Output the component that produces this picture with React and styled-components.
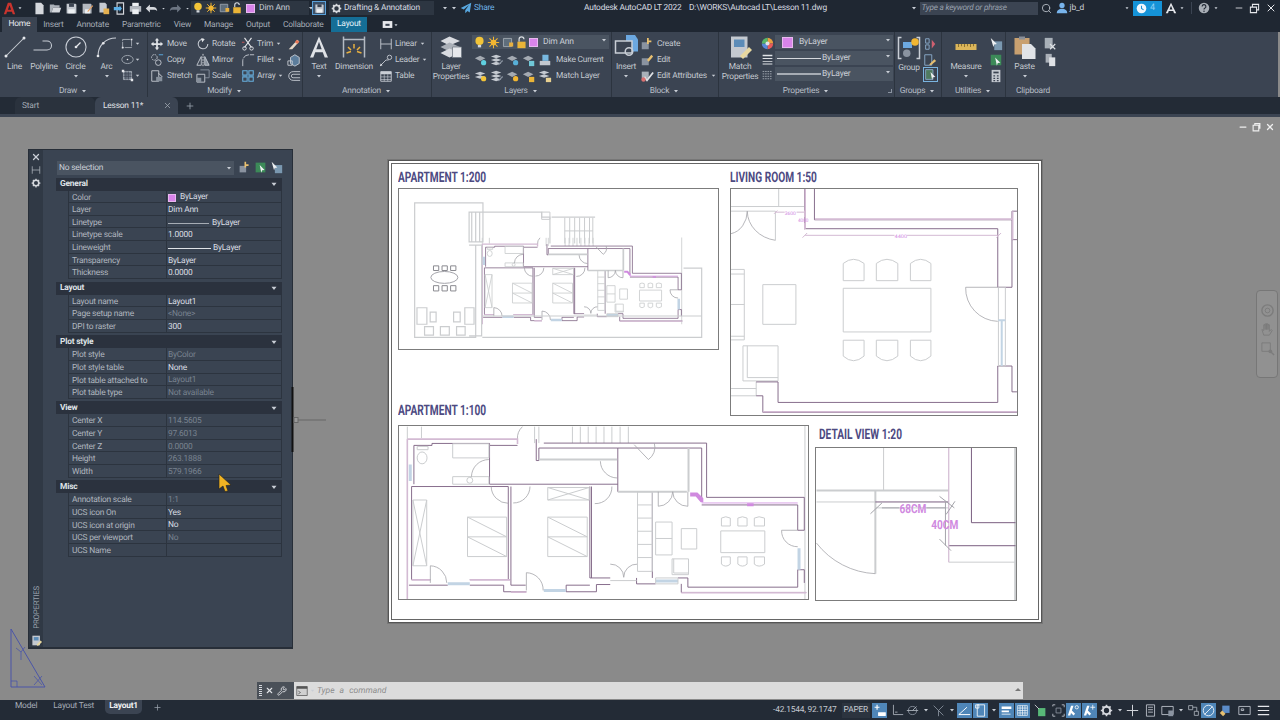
import React from 'react'
import styled, { createGlobalStyle } from 'styled-components'
import { X, Plus, Search, Wrench, Minus } from 'lucide-react'

const GlobalStyle = createGlobalStyle`
  html, body { margin: 0; padding: 0; background: #8a8a8a; }
  body { font-family: Roboto, "Liberation Sans", sans-serif; overflow: hidden; text-rendering: geometricPrecision; }
  #root { width: 1280px; height: 720px; }
`

// colours of the drawings
const WALL = '#7a5f80'
const PINK = '#d3bad3'
const GREY = '#cbcdcf'
const LINE = '#a4a4aa'
const FRAME = '#7c7c7c'
const GLASS = '#c2d4e4'
const DIM = '#d08adf'

/* ---------- icons ---------- */
const Svg = styled.svg`
  flex: none;
  display: block;
`
const ICONS = {
  doc: <path d="M3 1h7l3 3v11H3z" fill="#d5d8dd" />,
  open: <><path d="M1 3h5l1 1h6v3H5l-2 6H1z" fill="#aab0b8" /><path d="M5 7h10l-2 6H3z" fill="#d5d8dd" /></>,
  save: <><path d="M2 2h11l1 1v11H2z" fill="#c4c9d0" /><path d="M5 2h6v4H5z" fill="#3b4452" /><path d="M4 9h8v5H4z" fill="#edf0f3" /></>,
  saveas: <><path d="M2 2h10l1 1v11H2z" fill="#b4b9c0" /><path d="M5 9h6v5H5z" fill="#edf0f3" /><path d="M8 11l6-7 1 1-6 7H8z" fill="#e8a060" /></>,
  publish: <><path d="M3 1h7l2 2v10H3z" fill="#c4c9d0" /><path d="M8 8h7v7H8z" fill="#e4b050" /></>,
  share: <><path d="M5 1h8v14H5z" fill="none" stroke="#d5d8dd" strokeWidth="1.4" /><path d="M1 6h7V4l3 4-3 4v-2H1z" fill="#5db0e8" /></>,
  print: <><path d="M4 1h8v4H4z" fill="#edf0f3" /><path d="M1 5h14v7H1z" fill="#b4b9c0" /><path d="M4 9h8v6H4z" fill="#edf0f3" /></>,
  undo: <path d="M6 3L1 8l5 5V9.500h5c1.500 0 3 .5 4 1.500 0-3-2-5-5-5H6z" fill="#d5d8dd" />,
  redo: <path d="M10 3l5 5-5 5V9.500H5C3.500 9.500 2 10 1 11c0-3 2-5 5-5h4z" fill="#6c7582" />,
  caret: <path d="M4 6h8l-4 5z" fill="#c9ced6" />,
  bulb: <><circle cx="8" cy="6" r="5" fill="#f2c438" /><path d="M6 11h4v3H6z" fill="#d2d6dc" /></>,
  sun: <><circle cx="8" cy="8" r="3.500" fill="#f2b632" /><path d="M8 1v14M1 8h14M3 3l10 10M13 3L3 13" stroke="#f2b632" strokeWidth="1.300" /></>,
  frame: <><path d="M3 3h10v10H3z" fill="#5f6e7c" stroke="#a8b0b8" /><path d="M10 8h5v5h-5z" fill="#e8b040" /></>,
  lock: <><path d="M5 7V4a3 3 0 0 1 6 0" fill="none" stroke="#d8dce0" strokeWidth="1.500" /><path d="M3 7h10v8H3z" fill="#eab437" /></>,
  gear: <><circle cx="8" cy="8" r="4.500" fill="none" stroke="#d5d8dd" strokeWidth="2.500" /><path d="M8 1v3M8 12v3M1 8h3M12 8h3M3 3l2 2M11 11l2 2M13 3l-2 2M5 11l-2 2" stroke="#d5d8dd" strokeWidth="2" /></>,
  plane: <path d="M15 1L1 8l4 2 7-6-5 7v4l3-3 3 2z" fill="#58a8e0" />,
  line: <><path d="M2 14L14 2" stroke="#c9ced6" strokeWidth=".7" /><circle cx="2" cy="14" r="1" fill="#e6e8ec" /><circle cx="14" cy="2" r="1" fill="#e6e8ec" /></>,
  polyline: <path d="M1 10h9a3 3 0 0 0 0-6H7" fill="none" stroke="#c9ced6" strokeWidth=".7" />,
  circle: <><circle cx="8" cy="8" r="6.700" fill="none" stroke="#c9ced6" strokeWidth=".7" /><path d="M8 8l3-3" stroke="#e6e8ec" strokeWidth=".8" /><circle cx="8" cy="8" r=".9" fill="#e6e8ec" /></>,
  arc: <><path d="M2 14C2 7 7 2 14 2" fill="none" stroke="#c9ced6" strokeWidth=".7" /><circle cx="2" cy="14" r=".9" fill="#e6e8ec" /><circle cx="5.500" cy="5.500" r=".9" fill="#e6e8ec" /></>,
  rect: <><path d="M2 3h11v10H2z" fill="none" stroke="#aeb5be" strokeDasharray="9 1" /><path d="M12 2h2v2h-2zM1 12h2v2H1z" fill="#e6e8ec" /></>,
  ellipse: <><ellipse cx="8" cy="8" rx="7" ry="5" fill="none" stroke="#aeb5be" /><circle cx="8" cy="8" r="1" fill="#e6e8ec" /></>,
  hatch: <><path d="M3 3h10v10H3z" fill="#6f7a88" stroke="#aeb5be" /><path d="M3 6h10M3 9h10M6 3v10M9 3v10" stroke="#3b4452" /><path d="M1 1h3v3H1zM12 12h3v3h-3z" fill="#e6e8ec" /></>,
  move: <path d="M8 1l2.500 3H9v3h3V5.500L15 8l-3 2.500V9H9v3h1.500L8 15l-2.500-3H7V9H4v1.500L1 8l3-2.500V7h3V4H5.500z" fill="#dfe2e6" />,
  copy: <><circle cx="9.500" cy="11" r="3.200" fill="none" stroke="#c9ced6" /><circle cx="5" cy="5" r="3.200" fill="none" stroke="#c9ced6" strokeDasharray="2 1" /><path d="M10 2h5" stroke="#5db0e8" /></>,
  stretch: <><path d="M2 2h8v12H2z" fill="none" stroke="#c9ced6" /><path d="M7 9h7v5H7z" fill="#87909c" /><path d="M10 5l4 4" stroke="#e6e8ec" /></>,
  rotate: <><path d="M13.500 8A5.500 5.500 0 1 1 9 2.600" fill="none" stroke="#c9ced6" strokeWidth="1.200" /><path d="M6 1l4 1.500L7 6z" fill="#dfe2e6" /></>,
  mirror: <><path d="M1 14L6 4v10z" fill="none" stroke="#c9ced6" /><path d="M15 14L10 4v10z" fill="#87909c" stroke="#c9ced6" /><path d="M8 1v14" stroke="#e6e8ec" strokeDasharray="2 1" /></>,
  scale: <><path d="M1 6h9v9H1z" fill="none" stroke="#c9ced6" /><path d="M5 1h10v9H10" fill="none" stroke="#8a93a0" /><path d="M1 10h5v5H1z" fill="#87909c" /></>,
  trim: <><path d="M4 1l8 11M12 1L4 12" stroke="#e6e8ec" strokeWidth="1.300" /><circle cx="4" cy="13" r="2" fill="none" stroke="#e6e8ec" /><circle cx="12" cy="13" r="2" fill="none" stroke="#e6e8ec" /><path d="M1 6h3" stroke="#d05858" /></>,
  fillet: <path d="M2 15V9a7 7 0 0 1 7-7h6" fill="none" stroke="#c9ced6" strokeDasharray="8 1" />,
  array: <path d="M2 2h5v5H2zM9 2h5v5H9zM2 9h5v5H2zM9 9h5v5H9z" fill="none" stroke="#68b0e0" strokeWidth="1.200" />,
  eraser: <><path d="M2 14L12 3l2 2-8 9z" fill="#e6d8c8" /><path d="M9 6l2-3 3 2-2 3z" fill="#e87858" /></>,
  explode: <><path d="M4 5l5-3 5 3v7l-5 3-5-3z" fill="#5c7d9c" stroke="#c9ced6" /><path d="M1 9h5v5H1z" fill="none" stroke="#c9ced6" /></>,
  offset: <path d="M15 3H7a5 5 0 0 0 0 10h8M15 6H7a2 2 0 0 0 0 4h8" fill="none" stroke="#c9ced6" />,
  text: <path d="M8 1L2 15h2.200l1.300-3.500h5l1.300 3.500H14zM6.200 9.500L8 4.500l1.800 5z" fill="#dfe2e6" fillRule="evenodd" />,
  dimension: <><path d="M1 1v14M15 1v14M1 3h14" fill="none" stroke="#b4bac3" /><path d="M8 6v3M4 8l2 2M12 8l-2 2M3 12l3-1M13 12l-3-1" stroke="#e8b040" /></>,
  linear: <path d="M2 2v12M14 2v12M2 8h12" fill="none" stroke="#c9ced6" />,
  leader: <><path d="M2 14l6-6h3" fill="none" stroke="#c9ced6" /><circle cx="12" cy="5" r="2.500" fill="none" stroke="#c9ced6" /><path d="M1 15l3-1-2-2z" fill="#e6e8ec" /></>,
  table: <><path d="M2 3h12v11H2z" fill="none" stroke="#c9ced6" /><path d="M2 3h12v3H2z" fill="#c9ced6" /><path d="M2 9h12M2 12h12M6 6v8M10 6v8" stroke="#c9ced6" strokeWidth=".7" /></>,
  layers: <><path d="M1 4l6-3 7 3-7 3z" fill="#d8dbe0" /><path d="M1 8l6-3 7 3-7 3z" fill="#aab0b8" /><path d="M1 12l6-3 7 3-7 3z" fill="#d8dbe0" /><path d="M9 8h6v7H9z" fill="#e6e8ec" stroke="#6e7680" strokeWidth=".5" /></>,
  layOff: <><path d="M1 6l6-3 6 3-6 3z" fill="#a4aab2" /><circle cx="11" cy="11" r="3" fill="#5fd0e0" /></>,
  layIso: <><path d="M1 4l6-2 6 2-6 2zM1 8l6-2 6 2-6 2zM1 12l6-2 6 2-6 2z" fill="#c4c9d0" /><path d="M9 13l5-5 1 1-5 5z" fill="#8a93a0" /></>,
  layFrz: <><path d="M1 6l6-3 6 3-6 3z" fill="#a4aab2" /><circle cx="11" cy="11" r="3" fill="#58b0d8" /></>,
  layLock: <><path d="M1 6l6-3 6 3-6 3z" fill="#a4aab2" /><path d="M8 9h6v6H8z" fill="#70c8d8" /></>,
  layCur: <><path d="M2 9h12v5H2z" fill="#c4c9d0" /><path d="M5 2h7v7H5z" fill="#78b8e0" /></>,
  layOn: <><path d="M1 5l6-2 6 2-6 2zM1 9l6-2 6 2-6 2z" fill="#c4c9d0" /><circle cx="11" cy="11" r="3" fill="#f2c438" /></>,
  laySun: <><path d="M1 6l6-3 6 3-6 3z" fill="#a4aab2" /><circle cx="11" cy="11" r="3" fill="#f2b632" /></>,
  layUnlock: <><path d="M1 6l6-3 6 3-6 3z" fill="#a4aab2" /><path d="M8 9h6v6H8z" fill="#eab437" /></>,
  layMatch: <><path d="M1 4l6-2 6 2-6 2zM1 8l6-2 6 2-6 2z" fill="#c4c9d0" /><path d="M9 10h6v5H9z" fill="#e8d090" /></>,
  insert: <><path d="M8 0h6l2 3v8H8z" fill="#6ca8e0" /><path d="M1 4h11v8H1z" fill="#3b4452" stroke="#c9ced6" /><circle cx="10" cy="11" r="2.500" fill="none" stroke="#c9ced6" /></>,
  blockC: <><path d="M2 6h8v8H2z" fill="#8a93a0" /><path d="M8 1h2v3h3v2h-3v2H8z" fill="#e8c070" /></>,
  blockE: <><path d="M2 6h8v8H2z" fill="#8a93a0" /><path d="M8 8l5-6 2 2-5 6z" fill="#e8c070" /></>,
  attr: <><path d="M2 3h8v8H2z" fill="#a8b0b8" /><path d="M5 9l3 4 7-9" fill="none" stroke="#dfe2e6" strokeWidth="2" /><circle cx="4" cy="12" r="2.500" fill="#d87070" /></>,
  match: <><path d="M2 1h11v14H2z" fill="#c4c9d0" /><path d="M4 3h7v5H4z" fill="#5c8cb8" /><path d="M8 14l6-6 2 2-6 6z" fill="#e8d8a0" /></>,
  wheel: <><path d="M8 1a7 7 0 0 1 7 7H8z" fill="#e8a040" /><path d="M15 8a7 7 0 0 1-7 7V8z" fill="#e85a5a" /><path d="M8 15a7 7 0 0 1-7-7h7z" fill="#5888d8" /><path d="M1 8a7 7 0 0 1 7-7v7z" fill="#58b868" /><circle cx="8" cy="8" r="2.500" fill="#dfe2e6" /></>,
  bars: <path d="M2 2h12v2H2zM2 6h12v1.500H2zM2 10h12v1H2zM2 13h12v1H2z" fill="#dfe2e6" />,
  barsThin: <path d="M2 3h12M2 6h12M2 9h12M2 12h12" stroke="#aeb5be" strokeDasharray="2 1" />,
  group: <><path d="M3 1H1v14h2M13 1h2v14h-2" fill="none" stroke="#c9ced6" /><path d="M4 4h6v4H4z" fill="#6ca8e0" /><circle cx="6.500" cy="11.500" r="2.500" fill="#8a93a0" /><circle cx="12" cy="4" r="2.500" fill="#f2b632" /></>,
  ungroup: <><path d="M3 2h4v5H3zM3 9h4v5H3z" fill="none" stroke="#8fb0d0" /><path d="M10 3l4 5-4 5z" fill="#d06070" /></>,
  grpEdit: <><path d="M2 2h8v12H2z" fill="none" stroke="#8fb0d0" /><path d="M7 13l6-6 2 2-6 5z" fill="#e8c070" /></>,
  grpSel: <><path d="M2 2h9v12H2z" fill="#4f7a60" stroke="#8fb0d0" /><path d="M8 5l6 6-3 .5-1 3z" fill="#eef0f2" /></>,
  ruler: <><path d="M1 6h14v4H1z" fill="#dcb65a" /><path d="M3 6v2M5 6v1.500M7 6v2M9 6v1.500M11 6v2M13 6v1.500" stroke="#8a7030" strokeWidth=".7" /></>,
  qselect: <><path d="M6 5h9v10H6z" fill="#7a98b0" /><path d="M2 1l7 7-3 .5-1 3z" fill="#eef0f2" /></>,
  qgreen: <><path d="M2 2h12v12H2z" fill="#3c8a58" /><path d="M7 5l6 6-3 .5-1 3z" fill="#eef0f2" /></>,
  calc: <><path d="M3 1h10v14H3z" fill="#c4c9d0" /><path d="M5 3h6v2H5z" fill="#3b4452" /><path d="M5 7h2v1.500H5zM9 7h2v1.500H9zM5 10h2v1.500H5zM9 10h2v1.500H9zM5 12.500h2V14H5zM9 12.500h2V14H9z" fill="#3b4452" /></>,
  paste: <><path d="M1 2h10v11H1z" fill="#c8a070" /><path d="M4 1h4v2H4z" fill="#8a8f98" /><path d="M6 6h6l3 3v7H6z" fill="#e0e3e7" /></>,
  cut: <><path d="M2 1h9v12H2z" fill="#a8b0b8" /><path d="M8 8l6 6M14 8l-6 6" stroke="#dfe2e6" strokeWidth="1.300" /></>,
  copyClip: <><path d="M3 1h7v10H3z" fill="#aab0b8" /><path d="M7 5h7v10H7z" fill="#dfe2e6" /></>,
  window: <><path d="M1 2h14v12H1z" fill="#d0d0d0" stroke="#555" /><path d="M1 2h14v3H1z" fill="#555" /><path d="M3 8l3 2-3 2" fill="none" stroke="#555" /></>,
  viewbtn: <><path d="M1 3h14v10H1z" fill="#e6e8ec" /><path d="M5 7h6v3H5z" fill="#3b4452" /></>,
  clock: <><circle cx="8" cy="8" r="7" fill="#f0f6fc" /><path d="M8 4v4l3 2" fill="none" stroke="#1593d8" strokeWidth="1.500" /></>,
  apex: <path d="M8 1l7 14h-3l-1-3H5l-1 3H1zM6 10h4L8 5z" fill="#e6e8ec" fillRule="evenodd" />,
  help: <><circle cx="8" cy="8" r="7" fill="#a8aeb6" /><path d="M5.500 6a2.500 2.500 0 1 1 3.500 2.300c-.7.4-1 .8-1 1.700" fill="none" stroke="#232b36" strokeWidth="1.600" /><circle cx="8" cy="12.300" r="1" fill="#232b36" /></>,
  user: <><circle cx="8" cy="4.500" r="3.500" fill="#78b4ec" /><path d="M1 15c0-4 3-6 7-6s7 2 7 6z" fill="#78b4ec" /></>,
  logoA: <path d="M6 1h4l5 14h-3l-1-3H5l-1 3H1zM6 9.500h4L8 4z" fill="#c8342e" fillRule="evenodd" />,
  grid: <path d="M2 4h6M5 1v6M7 11h8v3H7z" stroke="#fff" strokeWidth="1.400" fill="#fff" />,
  ortho: <path d="M3 1v12h12M5 10h3" fill="none" stroke="#b4bac3" />,
  polar: <><circle cx="8" cy="8" r="5" fill="none" stroke="#8f98a4" /><path d="M1 8h14M8 8l5-5" stroke="#b4bac3" /></>,
  isnap: <path d="M2 2l12 12M14 2L8 8M8 8v7" stroke="#8f98a4" fill="none" />,
  ang: <path d="M1 13h14M1 13l10-9" stroke="#fff" strokeWidth="1.200" fill="none" />,
  snapbox: <path d="M4 1h9v14H4zM2 1h4v4H2z" fill="none" stroke="#fff" />,
  lw: <path d="M2 3h12v3H2zM2 8h9v2H2zM2 12h11v1H2z" fill="#fff" />,
  transp: <path d="M2 2h12v12H2zM5 2v12M8 2v12M11 2v12M2 5h12M2 8h12M2 11h12" stroke="#fff" strokeWidth=".8" fill="none" />,
  selcyc: <><path d="M5 5h9v10H5z" fill="#58b878" /><path d="M1 1l5 5" stroke="#dfe2e6" /></>,
  sel3d: <><path d="M5 5h6v6H5z" fill="none" stroke="#8f98a4" /><path d="M1 3V1h3M12 1h3v3M1 12v3h3M15 12v3h-3" fill="none" stroke="#c9ced6" /></>,
  annot: <><path d="M5 2l-4 12h3l1-3 3 3 2-2-4-4 2-6z" fill="#fff" /><circle cx="12" cy="4" r="2" fill="none" stroke="#fff" /></>,
  annot2: <><path d="M5 2l-4 12h3l1-3 3 3 2-2-4-4 2-6z" fill="#fff" /><path d="M12 1v6M9 4h6" stroke="#fff" /></>,
  plus: <path d="M8 1v14M1 8h14" stroke="#d5d8dd" strokeWidth="1.200" />,
  sheet: <path d="M3 1h10v14H3zM5 4h6M5 7h6M5 10h6" fill="none" stroke="#c9ced6" />,
  card: <><path d="M1 3h14v10H1z" fill="none" stroke="#c9ced6" /><path d="M9 8h6v7H9z" fill="#8a93a0" /></>,
  iso: <path d="M2 2h5v5H2zM9 9h5v5H9zM7 4h5v5" fill="none" stroke="#aeb5be" />,
  noCircle: <><circle cx="8" cy="8" r="6.500" fill="none" stroke="#fff" /><path d="M3 13L13 3" stroke="#fff" /></>,
  gearLock: <><path d="M4 2h9v9H4z" fill="#5b8cc8" /><path d="M1 11l4 4 3-3-4-4z" fill="#e8c070" /></>,
  screen: <path d="M1 3h14v10H1zM4 6h3v2H4z" fill="none" stroke="#c9ced6" />,
  burger: <path d="M1 3h14M1 8h14M1 13h14" stroke="#e6e8ec" strokeWidth="1.500" />,
  navOrbit: <><circle cx="8" cy="8" r="6" fill="none" stroke="#7c7c7c" strokeWidth="1.500" /><circle cx="8" cy="8" r="2.500" fill="none" stroke="#7c7c7c" /></>,
  navHand: <path d="M4 14L2 8l2 1V3h1.500v5V2H7v6V2h1.500v6V3H10v7l2-2 1 1-3 5z" fill="none" stroke="#7c7c7c" />,
  navZoom: <><path d="M2 2h9v9H2z" fill="none" stroke="#7c7c7c" /><circle cx="11" cy="11" r="2" fill="#7c7c7c" /><path d="M12 12l3 3" stroke="#7c7c7c" strokeWidth="1.500" /></>,
}
const I = ({ n, s = 14 }) => <Svg viewBox="0 0 16 16" width={s} height={s}>{ICONS[n]}</Svg>

/* ---------- title bar ---------- */
const Page = styled.div`
  width: 1280px;
  height: 720px;
  display: flex;
  flex-direction: column;
  overflow: hidden;
  color: #c4c9d0;
  font-size: 8.4px;
  letter-spacing: -.2px;
`
const TitleBar = styled.header`
  height: 16px;
  background: #1f2732;
  display: flex;
  align-items: center;
  flex: none;
  white-space: nowrap;
`
const Logo = styled.div`
  width: 33px;
  padding-left: 3px;
  box-sizing: border-box;
  display: flex;
  align-items: center;
  gap: 1px;
`
const Qat = styled.div`
  width: 158px;
  display: flex;
  align-items: center;
  gap: 3px;
`
const LayerBar = styled.div`
  width: 118px;
  height: 14px;
  background: #2d3642;
  display: flex;
  align-items: center;
  gap: 1px;
  padding-left: 1px;
  box-sizing: border-box;
  font-size: 8.5px;
`
const Swatch = styled.span`
  flex: none;
  width: ${p => p.$s || 9}px;
  height: ${p => p.$s || 9}px;
  margin-left: ${p => p.$ml || 0}px;
  background: #d884ea;
  border: 1px solid #e8b8f0;
  box-sizing: border-box;
`
const SaveBtn = styled.div`
  margin-left: 3px;
  width: 14px;
  height: 14px;
  border: 1px solid #5aa0d8;
  background: #3c5068;
  box-sizing: border-box;
  display: flex;
  align-items: center;
  justify-content: center;
`
const Workspace = styled.div`
  margin-left: 3px;
  width: 105px;
  height: 14px;
  background: #2d3642;
  display: flex;
  align-items: center;
  gap: 2px;
  padding-left: 2px;
  box-sizing: border-box;
  font-size: 8.4px;
  color: #d6dae0;
`
const ShareLink = styled.div`
  display: flex;
  align-items: center;
  gap: 2px;
  margin-left: 2px;
  color: #6fb4e8;
  font-size: 8.4px;
`
const AppTitle = styled.div`
  position: absolute;
  left: 584px;
  top: 0;
  height: 16px;
  line-height: 16px;
  color: #d6dae0;
  font-size: 8.4px;
  white-space: pre;
`
const SearchBox = styled.div`
  margin-left: 2px;
  width: 118px;
  height: 13px;
  line-height: 13px;
  background: #3b4452;
  font-style: italic;
  padding-left: 2px;
  box-sizing: border-box;
  color: #98a0ac;
  font-size: 8.2px;
`
const RightTools = styled.div`
  margin-left: auto;
  display: flex;
  align-items: center;
`
const NoticeBox = styled.div`
  width: 29px;
  height: 15px;
  background: #1593d8;
  display: flex;
  align-items: center;
  gap: 3px;
  padding-left: 3px;
  box-sizing: border-box;
  color: #8fd0f4;
  font-size: 9px;
`
const Gap = styled.span`
  flex: none;
  display: block;
  width: ${p => p.$w}px;
`
const Rule = styled.span`
  flex: none;
  width: 1px;
  height: 12px;
  background: #3b4452;
  margin: 0 6px;
`
const UserName = styled.span`
  color: #c9ced6;
  font-size: 8.4px;
`

/* ---------- ribbon ---------- */
const TabBar = styled.nav`
  height: 16px;
  background: #1f2732;
  display: flex;
  align-items: flex-end;
  padding-left: 2px;
  flex: none;
`
const Tab = styled.div`
  height: ${p => (p.$active || p.$blue ? 15 : 14)}px;
  line-height: 15px;
  padding: 0 ${p => p.$blue ? 6 : 6.5}px;
  font-size: 8.4px;
  background: ${p => p.$active ? '#3b4452' : p.$blue ? '#156e96' : 'transparent'};
  color: ${p => p.$active ? '#e8eaee' : p.$blue ? '#e8f4fa' : '#a5acb6'};
  margin-right: ${p => p.$blue ? 15 : 0}px;
  margin-left: ${p => p.$blue ? 1 : 0}px;
`
const TabExtras = styled.div`
  display: flex;
  align-items: center;
  height: 15px;
`
const Ribbon = styled.section`
  height: 65px;
  background: #3b4452;
  display: flex;
  flex: none;
  margin-right: 2px;
`
const Panel = styled.div`
  width: ${p => p.$w}px;
  flex: none;
  box-sizing: border-box;
  border-right: ${p => p.$last ? 0 : 1}px solid #2c343f;
  display: flex;
  flex-direction: column;
`
const PanelBody = styled.div`
  height: 53px;
  padding-top: 3px;
  box-sizing: border-box;
  display: flex;
`
const PanelTitle = styled.div`
  height: 12px;
  line-height: 12px;
  margin-top: 1px;
  position: relative;
  display: flex;
  align-items: center;
  justify-content: center;
  gap: 3px;
  color: #b8bec6;
  font-size: 8.4px;
  white-space: nowrap;
`
const Launcher = styled.span`
  position: absolute;
  right: 2px;
  top: 4px;
  width: 3px;
  height: 3px;
  border-right: 1px solid #8a93a0;
  border-bottom: 1px solid #8a93a0;
`
const BigBtn = styled.div`
  width: ${p => p.$w}px;
  flex: none;
  display: flex;
  flex-direction: column;
  align-items: center;
  text-align: center;
  line-height: 10px;
  font-size: 8.4px;
  white-space: nowrap;
  color: #c4c9d0;
`
const BigIcon = styled.div`
  height: 27px;
  display: flex;
  align-items: flex-start;
  justify-content: center;
  margin-top: ${p => p.$top || 0}px;
`
const Rows = styled.div`
  display: flex;
  flex-direction: column;
  padding-left: ${p => p.$pad || 0}px;
  flex: none;
`
const Cmd = styled.div`
  height: 16px;
  box-sizing: border-box;
  padding-top: 1.500px;
  width: ${p => (p.$w ? p.$w + 'px' : 'auto')};
  display: flex;
  align-items: center;
  gap: ${p => p.$gap ?? 2}px;
  white-space: nowrap;
  font-size: 8.4px;
  color: #c4c9d0;
`
const Selected = styled.div`
  width: 15px;
  height: 15px;
  border: 1px solid #7ab4e0;
  box-sizing: border-box;
  display: flex;
  align-items: center;
  justify-content: center;
`
const Combo = styled.div`
  width: ${p => p.$w}px;
  height: 14px;
  margin-bottom: ${p => p.$mb ?? 2}px;
  background: #4a5461;
  display: flex;
  align-items: center;
  position: relative;
  gap: ${p => p.$gap ?? 1}px;
  padding-left: ${p => p.$pad ?? 1}px;
  box-sizing: border-box;
  font-size: 8.5px;
  color: #c9ced6;
  white-space: nowrap;
`
const ComboCaret = styled.span`
  position: absolute;
  right: 1px;
  top: 1px;
`
const ComboLine = styled.span`
  flex: none;
  display: block;
  width: ${p => p.$w}px;
  height: ${p => p.$h || 1}px;
  background: ${p => p.$c || '#d5d8dd'};
`

/* ---------- document tabs ---------- */
const DocBar = styled.div`
  height: 17px;
  background: #232b36;
  display: flex;
  align-items: stretch;
  padding-left: 15px;
  flex: none;
`
const DocTab = styled.div`
  width: ${p => p.$w}px;
  box-sizing: border-box;
  padding-left: ${p => p.$pad}px;
  display: flex;
  align-items: center;
  justify-content: space-between;
  padding-right: 6px;
  background: ${p => p.$active ? '#3b4452' : '#2a323d'};
  border-radius: 6px 6px 0 0;
  color: ${p => p.$active ? '#e0e3e7' : '#a5acb6'};
  font-size: 8.4px;
`
const DocPlus = styled.div`
  margin-left: 7px;
  display: flex;
  align-items: center;
  color: #99a1ac;
`
const SubStrip = styled.div`
  height: 3px;
  background: #3b4452;
  flex: none;
`

/* ---------- canvas ---------- */
const Canvas = styled.main`
  position: relative;
  flex: 1;
  background: #8a8a8a;
  overflow: hidden;
`
const WinControls = styled.div`
  position: absolute;
  top: 5px;
  right: 5px;
  display: flex;
  gap: 4px;
  align-items: center;
  color: #eee;
`
const NavBar = styled.div`
  position: absolute;
  left: 1256px;
  top: 173px;
  width: 22px;
  height: 88px;
  box-sizing: border-box;
  background: #919191;
  border: 1px solid #777;
  border-radius: 4px;
  display: flex;
  flex-direction: column;
  align-items: center;
  padding-top: 12px;
  gap: 4px;
`

/* ---------- properties palette ---------- */
const Palette = styled.aside`
  position: absolute;
  left: 28px;
  top: 32px;
  width: 265px;
  height: 500px;
  background: #3a4452;
  border: 1px solid #272e38;
  border-bottom-width: 2px;
  box-sizing: border-box;
  display: flex;
`
const PaletteStrip = styled.div`
  width: 14px;
  background: #303945;
  display: flex;
  flex-direction: column;
  align-items: center;
  gap: 3px;
  padding-top: 2px;
  flex: none;
  color: #c9ced6;
`
const StripLabel = styled.div`
  margin-top: auto;
  writing-mode: vertical-rl;
  transform: rotate(180deg);
  font-size: 7.8px;
  color: #9aa2ae;
  margin-bottom: 3px;
`
const StripIcon = styled.div`
  margin-bottom: 1px;
`
const PaletteBody = styled.div`
  flex: 1;
  min-width: 0;
  padding: 10.5px 10px 0 13px;
`
const SelectorRow = styled.div`
  display: flex;
  align-items: center;
  height: 14px;
  margin-bottom: 3px;
`
const Selector = styled.div`
  width: 177px;
  height: 14px;
  margin: 0 0 0 1px;
  flex: none;
  background: #4a5461;
  display: flex;
  align-items: center;
  justify-content: space-between;
  padding: 0 1px 0 2px;
  box-sizing: border-box;
  color: #c9ced6;
  font-size: 8.4px;
`
const SelectorTool = styled.span`
  flex: none;
  margin-left: ${p => p.$m || 2}px;
`
const Section = styled.div`
  margin-bottom: 2.600px;
`
const SectionHead = styled.div`
  height: 13px;
  background: #2b323e;
  display: flex;
  align-items: center;
  justify-content: space-between;
  padding: 0 3px 0 4px;
  font-weight: 700;
  font-size: 8.4px;
  color: #dfe2e6;
`
const PropRow = styled.div`
  display: grid;
  grid-template-columns: 97px 1fr;
  grid-template-rows: 11.67px;
  height: 12.67px;
  margin-left: 12px;
  box-sizing: border-box;
  border-bottom: 1px solid #2c343f;
  border-left: 1px solid #2c343f;
  border-right: 1px solid #2c343f;
  font-size: 8.4px;
  line-height: 15px;
`
const PropLabel = styled.div`
  padding-left: 3px;
  color: #b0b6bf;
  white-space: nowrap;
`
const PropValue = styled.div`
  border-left: 1px solid #2c343f;
  padding: 3px 0 0 1px;
  box-sizing: border-box;
  display: flex;
  align-items: center;
  gap: ${p => p.$gap || 2}px;
  white-space: nowrap;
  color: ${p => p.$dim ? '#78828f' : '#d9dde2'};
`

/* ---------- paper ---------- */
const Paper = styled.div`
  position: absolute;
  left: 388px;
  top: 43px;
  width: 654px;
  height: 463px;
  background: #fff;
  box-sizing: border-box;
  border: 1px solid #555;
  outline: 1px solid #666;
  outline-offset: -4px;
  box-shadow: 0 0 0 1px #777;
`
const SheetView = styled.div`
  position: absolute;
  left: ${p => p.$x}px;
  top: ${p => p.$y}px;
`
const SheetTitle = styled.div`
  height: 16px;
  line-height: 18px;
  padding-left: ${p => p.$pad || 0}px;
  margin-bottom: ${p => p.$mb}px;
  font-family: Roboto, "Liberation Sans", sans-serif;
  font-weight: 700;
  font-size: 14.5px;
  letter-spacing: 0;
  color: #4d4a82;
  white-space: nowrap;
  transform: scaleX(.7);
  transform-origin: ${p => p.$pad || 0}px 0;
`
const ViewFrame = styled.svg`
  display: block;
  box-sizing: border-box;
  border: 1px solid ${FRAME};
  background: #fff;
  letter-spacing: 0;
  & * { vector-effect: non-scaling-stroke; }
`
const UcsMark = styled.svg`
  position: absolute;
  left: 10px;
  top: 511px;
`
const Pointer = styled.svg`
  position: absolute;
  left: 218px;
  top: 356px;
`
const Grip = styled.svg`
  position: absolute;
  left: 291px;
  top: 270px;
`
const CommandLine = styled.div`
  position: absolute;
  left: 257px;
  top: 565px;
  width: 766px;
  height: 17px;
  display: flex;
`
const CommandTools = styled.div`
  width: 37px;
  background: #4a5058;
  display: flex;
  align-items: center;
  padding-left: 2px;
  gap: 3px;
  box-sizing: border-box;
  color: #e4e6e9;
`
const GripDots = styled.span`
  width: 3px;
  height: 11px;
  background: repeating-linear-gradient(#d5d8dd 0 1px, transparent 1px 2px);
  flex: none;
`
const CommandInput = styled.div`
  flex: 1;
  background: #dcdcdc;
  display: flex;
  align-items: center;
  gap: 1px;
  padding-left: 2px;
  font-style: italic;
  color: #8c8c8c;
  font-size: 8.5px;
  letter-spacing: 0;
  word-spacing: 3px;
  position: relative;
`
const CommandCaret = styled.span`
  position: absolute;
  right: 2px;
  top: 6px;
  width: 0;
  height: 0;
  border: 3px solid transparent;
  border-top: 0;
  border-bottom: 3px solid #777;
`

/* ---------- status bar ---------- */
const StatusBar = styled.footer`
  height: 20px;
  background: #232b36;
  display: flex;
  align-items: center;
  flex: none;
`
const LayoutTab = styled.div`
  padding: 0 ${p => p.$px}px;
  height: 14px;
  line-height: 12px;
  margin-top: -6px;
  font-size: 8.4px;
  background: ${p => p.$active ? '#3b4452' : 'transparent'};
  border-radius: 0 0 5px 5px;
  color: ${p => p.$active ? '#f0f2f4' : '#a5acb6'};
  font-weight: ${p => p.$active ? 700 : 400};
`
const LayoutTabs = styled.div`
  display: flex;
  align-items: center;
  padding-left: 10px;
  gap: ${p => p.$gap}px;
  color: #99a1ac;
`
const LayoutPlus = styled.div`
  margin: -6px 0 0 3px;
  display: flex;
`
const Coords = styled.div`
  margin-left: auto;
  color: #c4c9d0;
  font-size: 8.4px;
  white-space: nowrap;
  margin-right: 5px;
`
const PaperBtn = styled.div`
  background: #2c343f;
  padding: 0 2px;
  height: 15px;
  line-height: 15px;
  color: #c4c9d0;
  font-size: 8.4px;
  margin-right: 2px;
`
const StatusBtn = styled.div`
  flex: none;
  width: ${p => p.$w || 15}px;
  margin-right: ${p => p.$mr ?? 1}px;
  height: 15px;
  display: flex;
  align-items: center;
  justify-content: center;
  background: ${p => p.$on ? '#4f86b8' : 'transparent'};
`

/* ---------- plan drawings ---------- */
const Door = ({ d, c = LINE }) => <path d={d} fill="none" stroke={c} strokeWidth=".8" />
const Strokes = ({ c, w = 1, d }) => <path d={d} fill="none" stroke={c} strokeWidth={w} />

// shared floor plan, in the 1:100 viewport's own units; k thins the strokes when drawn small
const FloorPlan = ({ k = 1 }) => (
  <>
    <Strokes c={GREY} w={k} d="M547 80v50M571 80v50M595 80v50M619 80v50M643 80v50M667 80v50M692 80v50M717 80v50" />
    <Strokes c={GREY} w={k} d="M45 80v40M88 80v35M432 80v50M445 80v50M1254 78v526" />
    <Door d="M380 118a55 50 0 0 1 15-38" />
    <Strokes c={PINK} w={1.600 * k} d="M45 118H380V133M45 118V604" />
    <Strokes c={WALL} w={.9 * k} d="M65 137H120V131H295V137H380M65 137V255M58 262H352M295 137V255H685M445 145H685V278M437 118V183H445V145M460 130H955V295H1252" />
    <Strokes c={WALL} w={.9 * k} d="M685 145H940V300M940 318H1232V395H1252V295M1232 515H1252V555M898 568H1232V515" />
    <Strokes c={WALL} w={.9 * k} d="M58 262V545H115M235 545H358M352 262V545M360 262V562H405M407 582H338V562H235M168 562H50M605 262V540M600 262V540H662M528 582V562H600M528 582H620V560H662" />
    <Strokes c={WALL} w={.9 * k} d="M742 540V558H800M868 540H898V568M878 558V584H1258M790 278V540" />
    <Strokes c={PINK} w={1.600 * k} d="M58 546H115M235 546H358M360 583H407M878 585H1258" />
    <Strokes c={GREY} w={2 * k} d="M445 180H683M685 278H895M900 145V278" />
    <Strokes c={GLASS} w={3 * k} d="M168 558H235M460 578H527M800 549H868M1236 450V515M54 195V245" />
    <Strokes c={GREY} w={k} d="M183 132H293V175H183ZM75 140H108V150H75ZM183 232H293V255H183ZM62 303H104V503H62ZM472 265H598V303H472ZM228 355H347V475H228ZM472 355H592V475H472Z" />
    <Strokes c={GREY} w={k} d="M62 303L104 503M104 303L62 503M472 265L598 303M598 265L472 303M228 355L347 415M228 415L347 475M228 415H347M472 355L592 415M472 415L592 475M472 415H592" />
    <ellipse cx="90" cy="175" rx="15" ry="18" fill="none" stroke={GREY} strokeWidth={k} />
    <circle cx="235" cy="243" r="9" fill="none" stroke={GREY} strokeWidth={k} />
    <Door d="M293 180A53 53 0 0 0 240 232M300 262A52 52 0 0 0 352 313M418 262A50 50 0 0 1 367 312M632 185A52 52 0 0 0 683 236M667 262A50 50 0 0 1 615 314M735 135L778 180M796 130A45 45 0 0 1 778 180" />
    <Door d="M115 503A52 52 0 0 1 165 555M115 503V555M407 524A52 52 0 0 1 458 578M407 524V578M662 498A40 40 0 0 1 703 538M745 498A40 40 0 0 0 703 538M808 278V322A45 45 0 0 0 852 278M898 278V322A45 45 0 0 1 852 278" />
    <Strokes c={GREY} w={k} d="M745 278H790V520H745ZM745 318H790M745 358H790M745 398H790M745 438H790M745 478H790M800 370H850V470H800ZM800 420H850M878 390H925V452H878ZM998 397H1132V463H998ZM850 482H900V530H850ZM855 482V525H900M662 548H742M800 540H868V558H800Z" />
    <Strokes c={GREY} w={k} d="M1000 382V358Q1013 350 1027 358V382ZM1050 382V358Q1064 350 1078 358V382ZM1100 382V358Q1114 350 1131 358V382ZM1000 476H1027V498Q1013 510 1000 498ZM1050 476H1078V498Q1064 510 1050 498ZM1100 476H1131V498Q1114 510 1100 498Z" />
    <Door d="M1183 395H1232M1183 395A48 48 0 0 0 1232 445" />
    <path d="M905 280h22l18 18v12h-8l-15-18h-17z" fill={DIM} />
    <path d="M1078 313h20v9h-20z" fill={DIM} />
    <Strokes c={DIM} w={.8 * k} d="M940 312H1232" />
  </>
)

const Apartment200 = () => (
  <ViewFrame viewBox="40 85 962 485" width="321" height="162">
    <g transform="translate(267.500 193) scale(.5)"><FloorPlan k={.85} /></g>
    <Strokes c={GREY} w={1.200} d="M292 155V127H85V535H270V255M292 155H470V170H495V250M290 535H955V325H900M500 170H632M250 155H292V245H250ZM258 155V245M270 155V245M282 155V245M250 255H288V530H250" />
    <Strokes c={GREY} d="M540 172V250M555 172V250M570 172V250M585 172V250M600 172V250M615 172V250M625 172V250M540 212H625M290 470H955M470 155H495V177H470Z" />
    <ellipse cx="175" cy="353" rx="41" ry="18" fill="none" stroke={LINE} />
    <Strokes c="#8a8a90" d="M142 318H158V332H142ZM168 318H184V332H168ZM194 318H210V332H194ZM142 378H158V394H142ZM168 378H184V394H168ZM194 378H210V394H194Z" />
    <Strokes c={GREY} w={1.200} d="M92 445H122V495H92ZM132 458H150V488H132ZM203 458H223V488H203ZM237 445H265V495H237ZM115 502H142V528H115ZM163 502H190V528H163ZM212 502H238V528H212Z" />
  </ViewFrame>
)

const LivingRoom = () => (
  <ViewFrame viewBox="16 85 864 683" width="288" height="228">
    <Strokes c={GREY} d="M16 138H238M160 85V138M16 152H150V240" />
    <Door d="M65 152A100 90 0 0 0 150 240M65 152A60 70 0 0 1 16 220" />
    <Strokes c={GREY} d="M355 362V310Q386 285 418 310V362ZM455 362V310Q487 285 520 310V362ZM558 362V310Q589 285 620 310V362ZM355 542H418V590Q386 618 355 590ZM455 542H520V590Q487 618 455 590ZM558 542H620V590Q589 618 558 590ZM355 385H620V517H355ZM112 374H212V494H112ZM16 328H56V541H16M16 342H56M16 434H56M16 530H56M52 559H158V665H52ZM65 559V655H158M16 688H92M16 710H92M92 668V710" />
    <Strokes c={WALL} w={.9} d="M268 85V178H865M238 85V205H822V382H865V152H880M865 238H880M822 620H865V698H880M822 620V730H158V668H92M92 710H112V760H880" />
    <Strokes c={PINK} w={1.600} d="M240 85V205M270 176H865M112 758H880M867 152V238" />
    <Door d="M725 382H822M725 382A100 100 0 0 0 822 485" />
    <Strokes c={GREY} d="M824 382H845V620H824Z" />
    <Strokes c={GLASS} w={2} d="M824 482H845M834 485V620" />
    <Strokes c={PINK} d="M150 155H178M214 155H238M238 150V170M238 188V208M240 225H510M548 225H825M232 232L246 218M818 232L832 218M146 160L156 150" />
    <text x="178" y="163" fontFamily="Roboto" fontSize="15" fill={DIM} textLength="34" lengthAdjust="spacingAndGlyphs">3600</text>
    <text x="218" y="185" fontFamily="Roboto" fontSize="15" fill={DIM} textLength="32" lengthAdjust="spacingAndGlyphs">4000</text>
    <text x="510" y="233" fontFamily="Roboto" fontSize="15" fill={DIM} textLength="38" lengthAdjust="spacingAndGlyphs">4400</text>
  </ViewFrame>
)

const DetailView = () => (
  <ViewFrame viewBox="16 83 605 462" width="202" height="154">
    <Strokes c={GREY} d="M220 83V212M16 247H195M195 265H418M418 430H621" />
    <Strokes c={GREY} w={2} d="M16 212H418M195 212V465M620 83V545" />
    <Door d="M16 372A240 240 0 0 0 195 465" />
    <Strokes c={WALL} d="M487 83V310H621M418 380H621M195 247H418" />
    <Strokes c={PINK} w={1.200} d="M418 83V430" />
    <Strokes c={LINE} d="M180 283L215 250M390 230L435 265M410 285L437 245M390 360L425 395M408 247V380M215 265H268M350 265H408" />
    <text x="268" y="281" fontFamily="Roboto" fontWeight="700" fontSize="38" fill={DIM} textLength="82" lengthAdjust="spacingAndGlyphs">68CM</text>
    <text x="365" y="330" fontFamily="Roboto" fontWeight="700" fontSize="38" fill={DIM} textLength="82" lengthAdjust="spacingAndGlyphs">40CM</text>
  </ViewFrame>
)

const Apartment100 = () => (
  <ViewFrame viewBox="25 78 1233 526" width="411" height="175">
    <FloorPlan />
  </ViewFrame>
)

/* ---------- data ---------- */
const PROPS = [
  { title: 'General', rows: [
    { k: 'Color', v: 'ByLayer', swatch: true },
    { k: 'Layer', v: 'Dim Ann' },
    { k: 'Linetype', v: 'ByLayer', line: '#a6acb4', lw: 41, gap: 3 },
    { k: 'Linetype scale', v: '1.0000' },
    { k: 'Lineweight', v: 'ByLayer', line: '#e0e3e7', lw: 43, gap: 2 },
    { k: 'Transparency', v: 'ByLayer' },
    { k: 'Thickness', v: '0.0000' },
  ] },
  { title: 'Layout', rows: [
    { k: 'Layout name', v: 'Layout1' },
    { k: 'Page setup name', v: '<None>', dim: true },
    { k: 'DPI to raster', v: '300' },
  ] },
  { title: 'Plot style', rows: [
    { k: 'Plot style', v: 'ByColor', dim: true },
    { k: 'Plot style table', v: 'None' },
    { k: 'Plot table attached to', v: 'Layout1', dim: true },
    { k: 'Plot table type', v: 'Not available', dim: true },
  ] },
  { title: 'View', rows: [
    { k: 'Center X', v: '114.5605', dim: true },
    { k: 'Center Y', v: '97.6013', dim: true },
    { k: 'Center Z', v: '0.0000', dim: true },
    { k: 'Height', v: '263.1888', dim: true },
    { k: 'Width', v: '579.1966', dim: true },
  ] },
  { title: 'Misc', rows: [
    { k: 'Annotation scale', v: '1:1', dim: true },
    { k: 'UCS icon On', v: 'Yes' },
    { k: 'UCS icon at origin', v: 'No' },
    { k: 'UCS per viewport', v: 'No', dim: true },
    { k: 'UCS Name', v: '' },
  ] },
]

const TABS = ['Home', 'Insert', 'Annotate', 'Parametric', 'View', 'Manage', 'Output', 'Collaborate']

const STATUS = [
  { n: 'grid', on: true, mr: 3 }, { n: 'ortho', mr: 0 }, { n: 'polar', mr: 0 }, { n: 'caret', w: 11, mr: 0 }, { n: 'isnap', mr: 0 }, { n: 'caret', w: 11, mr: 0 },
  { n: 'ang', on: true }, { n: 'snapbox', on: true, mr: 0 }, { n: 'caret', w: 11, mr: 0 }, { n: 'lw', on: true }, { n: 'transp', on: true, mr: 3 }, { n: 'selcyc', mr: 3 },
  { n: 'sel3d', mr: 0 }, { n: 'annot', on: true }, { n: 'annot2', on: true, mr: 2 }, { n: 'gear', mr: 0 }, { n: 'caret', w: 11, mr: 0 }, { n: 'plus', mr: 3 },
  { n: 'sheet', mr: 2 }, { n: 'card', mr: 0 }, { n: 'caret', w: 11, mr: 0 }, { n: 'iso', mr: 0 }, { n: 'noCircle', on: true, mr: 2 }, { n: 'gearLock', mr: 4 }, { n: 'screen', mr: 4 }, { n: 'burger', mr: 9 },
]

const Big = ({ n, w, s = 24, top, caret, children }) => (
  <BigBtn $w={w}>
    <BigIcon $top={top}><I n={n} s={s} /></BigIcon>
    {children}
    {caret && <I n="caret" s={8} />}
  </BigBtn>
)

const Title = ({ children, more = true, launcher }) => (
  <PanelTitle>
    {children}{more && <I n="caret" s={8} />}
    {launcher && <Launcher />}
  </PanelTitle>
)

export default function App () {
  return (
    <Page>
      <GlobalStyle />
      <TitleBar>
        <Logo><I n="logoA" s={13} /><I n="caret" s={6} /></Logo>
        <Qat>
          {['doc', 'open', 'save', 'saveas', 'publish', 'share', 'print', 'undo'].map(n => <I key={n} n={n} s={13} />)}
          <I n="caret" s={5} />
          <I n="redo" s={13} />
          <I n="caret" s={5} />
        </Qat>
        <LayerBar>
          <I n="bulb" s={12} /><I n="sun" s={12} /><I n="frame" s={12} /><I n="lock" s={12} />
          <Swatch $ml={2} />
          <Gap $w={2} />Dim Ann
          <Gap $w={15} /><I n="caret" s={8} />
        </LayerBar>
        <SaveBtn><I n="save" s={11} /></SaveBtn>
        <Workspace><I n="gear" s={11} />Drafting &amp; Annotation</Workspace>
        <Gap $w={7} /><I n="caret" s={8} /><Gap $w={1} /><I n="caret" s={8} />
        <ShareLink><I n="plane" s={12} />Share</ShareLink>
        <AppTitle>{'Autodesk AutoCAD LT 2022    D:\\WORKS\\Autocad LT\\Lesson 11.dwg'}</AppTitle>
        <RightTools>
          <I n="caret" s={8} />
          <SearchBox>Type a keyword or phrase</SearchBox>
          <Gap $w={3} /><Search size={11} color="#b4bac3" />
          <Gap $w={4} /><I n="user" s={12} /><Gap $w={2} /><UserName>jb_d</UserName>
          <Gap $w={40} /><I n="caret" s={6} /><Gap $w={3} />
          <NoticeBox><I n="clock" s={11} />4</NoticeBox>
          <Gap $w={3} /><I n="apex" s={12} /><Gap $w={2} /><I n="caret" s={6} />
          <Rule /><I n="help" s={12} /><Gap $w={3} /><I n="caret" s={6} />
          <Gap $w={15} /><Minus size={10} color="#e6e8ec" />
          <Gap $w={5} /><Svg viewBox="0 0 16 16" width="11" height="11"><path d="M2 6h9v8H2zM5 6V2h9v8h-3" fill="none" stroke="#e6e8ec" strokeWidth="1.500" /></Svg>
          <Gap $w={5} /><X size={12} color="#e6e8ec" /><Gap $w={3} />
        </RightTools>
      </TitleBar>

      <TabBar>
        {TABS.map(t => <Tab key={t} $active={t === 'Home'}>{t}</Tab>)}
        <Tab $blue>Layout</Tab>
        <TabExtras><I n="viewbtn" s={11} /><I n="caret" s={6} /></TabExtras>
      </TabBar>

      <Ribbon>
        <Panel $w={148}>
          <PanelBody>
            <Big n="line" w={29} caret={false}>Line</Big>
            <Big n="polyline" w={30}>Polyline</Big>
            <Big n="circle" w={33} caret>Circle</Big>
            <Big n="arc" w={29} caret>Arc</Big>
            <Rows>
              {['rect', 'ellipse', 'hatch'].map(n => <Cmd key={n} $gap={0}><I n={n} s={13} /><I n="caret" s={7} /></Cmd>)}
            </Rows>
          </PanelBody>
          <Title>Draw</Title>
        </Panel>

        <Panel $w={155}>
          <PanelBody>
            <Rows $pad={2}>
              <Cmd $w={46} $gap={3}><I n="move" />Move</Cmd>
              <Cmd $w={46} $gap={3}><I n="copy" />Copy</Cmd>
              <Cmd $w={46} $gap={3}><I n="stretch" />Stretch</Cmd>
            </Rows>
            <Rows>
              <Cmd $w={45}><I n="rotate" />Rotate</Cmd>
              <Cmd $w={45}><I n="mirror" />Mirror</Cmd>
              <Cmd $w={45}><I n="scale" />Scale</Cmd>
            </Rows>
            <Rows>
              <Cmd $w={46}><I n="trim" />Trim<I n="caret" s={7} /></Cmd>
              <Cmd $w={46}><I n="fillet" />Fillet<I n="caret" s={7} /></Cmd>
              <Cmd $w={46}><I n="array" />Array<I n="caret" s={7} /></Cmd>
            </Rows>
            <Rows>
              <Cmd><I n="eraser" /></Cmd>
              <Cmd><I n="explode" /></Cmd>
              <Cmd><I n="offset" /></Cmd>
            </Rows>
          </PanelBody>
          <Title>Modify</Title>
        </Panel>

        <Panel $w={129}>
          <PanelBody>
            <Big n="text" w={32} caret>Text</Big>
            <Big n="dimension" w={38}>Dimension</Big>
            <Rows $pad={6}>
              <Cmd $gap={2}><I n="linear" />Linear<I n="caret" s={7} /></Cmd>
              <Cmd $gap={2}><I n="leader" />Leader<I n="caret" s={7} /></Cmd>
              <Cmd $gap={2}><I n="table" />Table</Cmd>
            </Rows>
          </PanelBody>
          <Title>Annotation</Title>
        </Panel>

        <Panel $w={180}>
          <PanelBody>
            <Big n="layers" w={38}>Layer<br />Properties</Big>
            <Rows $pad={2}>
              <Combo $w={137} $mb={2}>
                <I n="bulb" s={13} /><I n="sun" s={13} /><I n="frame" s={13} /><I n="lock" s={13} />
                <Swatch />
                <Gap $w={3} />Dim Ann
                <ComboCaret><I n="caret" s={8} /></ComboCaret>
              </Combo>
              <Cmd $gap={2}>
                <Gap $w={0} /><I n="layOff" /><I n="layIso" /><I n="layFrz" /><I n="layLock" /><I n="layCur" />
                <Gap $w={0} />Make Current
              </Cmd>
              <Cmd $gap={2}>
                <Gap $w={0} /><I n="layOn" /><I n="layIso" /><I n="laySun" /><I n="layUnlock" /><I n="layMatch" />
                <Gap $w={0} />Match Layer
              </Cmd>
            </Rows>
          </PanelBody>
          <Title>Layers</Title>
        </Panel>

        <Panel $w={107}>
          <PanelBody>
            <Big n="insert" w={28} caret>Insert</Big>
            <Rows $pad={0}>
              <Cmd $gap={3}><I n="blockC" />Create</Cmd>
              <Cmd $gap={3}><I n="blockE" />Edit</Cmd>
              <Cmd $gap={3}><I n="attr" />Edit Attributes<I n="caret" s={7} /></Cmd>
            </Rows>
          </PanelBody>
          <Title>Block</Title>
        </Panel>

        <Panel $w={176}>
          <PanelBody>
            <Big n="match" w={42}>Match<br />Properties</Big>
            <Rows>
              <Cmd><I n="wheel" s={13} /></Cmd>
              <Cmd><I n="bars" s={13} /></Cmd>
              <Cmd><I n="barsThin" s={13} /></Cmd>
            </Rows>
            <Rows $pad={1}>
              <Combo $w={118} $pad={7} $gap={6}>
                <Swatch $s={11} />ByLayer
                <ComboCaret><I n="caret" s={8} /></ComboCaret>
              </Combo>
              <Combo $w={118} $pad={2}>
                <ComboLine $w={44} $c="#d5d8dd" />ByLayer
                <ComboCaret><I n="caret" s={8} /></ComboCaret>
              </Combo>
              <Combo $w={118} $pad={2}>
                <ComboLine $w={44} $h={2} $c="#a6acb4" />ByLayer
                <ComboCaret><I n="caret" s={8} /></ComboCaret>
              </Combo>
            </Rows>
          </PanelBody>
          <Title launcher>Properties</Title>
        </Panel>

        <Panel $w={47}>
          <PanelBody>
            <Big n="group" w={28} top={1}>Group</Big>
            <Rows>
              <Cmd><I n="ungroup" /></Cmd>
              <Cmd><I n="grpEdit" /></Cmd>
              <Selected><I n="grpSel" s={13} /></Selected>
            </Rows>
          </PanelBody>
          <Title>Groups</Title>
        </Panel>

        <Panel $w={64}>
          <PanelBody>
            <Gap $w={2} />
            <Big n="ruler" w={44} caret>Measure</Big>
            <Rows $pad={1}>
              <Cmd><I n="qselect" /></Cmd>
              <Cmd><I n="qgreen" /></Cmd>
              <Cmd><I n="calc" /></Cmd>
            </Rows>
          </PanelBody>
          <Title>Utilities</Title>
        </Panel>

        <Panel $w={54} $last>
          <PanelBody>
            <Big n="paste" w={37} caret>Paste</Big>
            <Rows>
              <Cmd><I n="cut" /></Cmd>
              <Cmd><I n="copyClip" /></Cmd>
            </Rows>
          </PanelBody>
          <Title more={false}>Clipboard</Title>
        </Panel>
      </Ribbon>

      <DocBar>
        <DocTab $w={80} $pad={7}>Start</DocTab>
        <DocTab $w={83} $pad={8} $active>Lesson 11*<X size={9} color="#a5acb6" /></DocTab>
        <DocPlus><Plus size={10} /></DocPlus>
      </DocBar>
      <SubStrip />

      <Canvas>
        <WinControls>
          <Minus size={10} strokeWidth={3} />
          <Svg viewBox="0 0 16 16" width="9" height="9"><path d="M2 4h10v10H2zM5 4V1h9v9" fill="none" stroke="#eee" strokeWidth="2" /></Svg>
          <X size={10} strokeWidth={3} />
        </WinControls>
        <NavBar>
          <I n="navOrbit" s={15} />
          <I n="navHand" s={15} />
          <I n="navZoom" s={15} />
        </NavBar>

        <Paper>
          <SheetView $x={9} $y={8}>
            <SheetTitle $mb={3}>APARTMENT 1:200</SheetTitle>
            <Apartment200 />
          </SheetView>
          <SheetView $x={341} $y={8}>
            <SheetTitle $mb={3}>LIVING ROOM 1:50</SheetTitle>
            <LivingRoom />
          </SheetView>
          <SheetView $x={9} $y={241}>
            <SheetTitle $mb={7}>APARTMENT 1:100</SheetTitle>
            <Apartment100 />
          </SheetView>
          <SheetView $x={426} $y={265}>
            <SheetTitle $pad={4} $mb={5}>DETAIL VIEW 1:20</SheetTitle>
            <DetailView />
          </SheetView>
        </Paper>

        <Palette>
          <PaletteStrip>
            <X size={10} strokeWidth={3} />
            <I n="linear" s={10} />
            <I n="gear" s={10} />
            <StripLabel>PROPERTIES</StripLabel>
            <StripIcon><I n="match" s={11} /></StripIcon>
          </PaletteStrip>
          <PaletteBody>
            <SelectorRow>
              <Selector>No selection<I n="caret" s={8} /></Selector>
              <SelectorTool $m={4}><I n="blockC" s={13} /></SelectorTool>
              <SelectorTool $m={3}><I n="qgreen" s={13} /></SelectorTool>
              <SelectorTool $m={3}><I n="qselect" s={13} /></SelectorTool>
            </SelectorRow>
            {PROPS.map(sec => (
              <Section key={sec.title}>
                <SectionHead>{sec.title}<I n="caret" s={10} /></SectionHead>
                {sec.rows.map(r => (
                  <PropRow key={r.k}>
                    <PropLabel>{r.k}</PropLabel>
                    <PropValue $dim={r.dim} $gap={r.swatch ? 4 : r.gap}>
                      {r.swatch && <Swatch $s={8} />}
                      {r.line && <ComboLine $w={r.lw} $c={r.line} />}
                      {r.v}
                    </PropValue>
                  </PropRow>
                ))}
              </Section>
            ))}
          </PaletteBody>
        </Palette>

        <Grip width="36" height="70" viewBox="0 0 36 70">
          <path d="M1.500 0V65" stroke="#111" strokeWidth="2" />
          <path d="M5 33H35" stroke="#666" />
          <rect x="3" y="30.500" width="4" height="5" fill="#999" stroke="#666" />
        </Grip>
        <Pointer width="14" height="19" viewBox="0 0 14 19">
          <path d="M1 1l12 11-5 .5 2 5.500-3 .5-2-5.500-4 3z" fill="#f0b323" stroke="#222" strokeWidth=".6" />
        </Pointer>
        <UcsMark width="36" height="60" viewBox="0 0 36 60">
          <path d="M1 1L35 59H1Z" fill="none" stroke="#4a55a8" />
          <path d="M1 53h6v6M6 20l5 4v8M11 24l4-5M24 48l8 9M32 48l-8 9" fill="none" stroke="#4a55a8" strokeWidth=".8" />
        </UcsMark>

        <CommandLine>
          <CommandTools>
            <GripDots />
            <X size={9} strokeWidth={3} />
            <Wrench size={10} />
          </CommandTools>
          <CommandInput>
            <I n="window" s={12} /><I n="caret" s={7} />
            Type a command
            <CommandCaret />
          </CommandInput>
        </CommandLine>
      </Canvas>

      <StatusBar>
        <LayoutTabs $gap={8}>
          <LayoutTab $px={5}>Model</LayoutTab>
          <LayoutTab $px={3}>Layout Test</LayoutTab>
          <LayoutTab $px={4} $active>Layout1</LayoutTab>
          <LayoutPlus><Plus size={9} /></LayoutPlus>
        </LayoutTabs>
        <Coords>-42.1544, 92.1747</Coords>
        <PaperBtn>PAPER</PaperBtn>
        {STATUS.map((b, i) => (
          <StatusBtn key={i} $on={b.on} $w={b.w} $mr={b.mr}>
            <I n={b.n} s={b.n === 'caret' ? 8 : 13} />
          </StatusBtn>
        ))}
      </StatusBar>
    </Page>
  )
}
